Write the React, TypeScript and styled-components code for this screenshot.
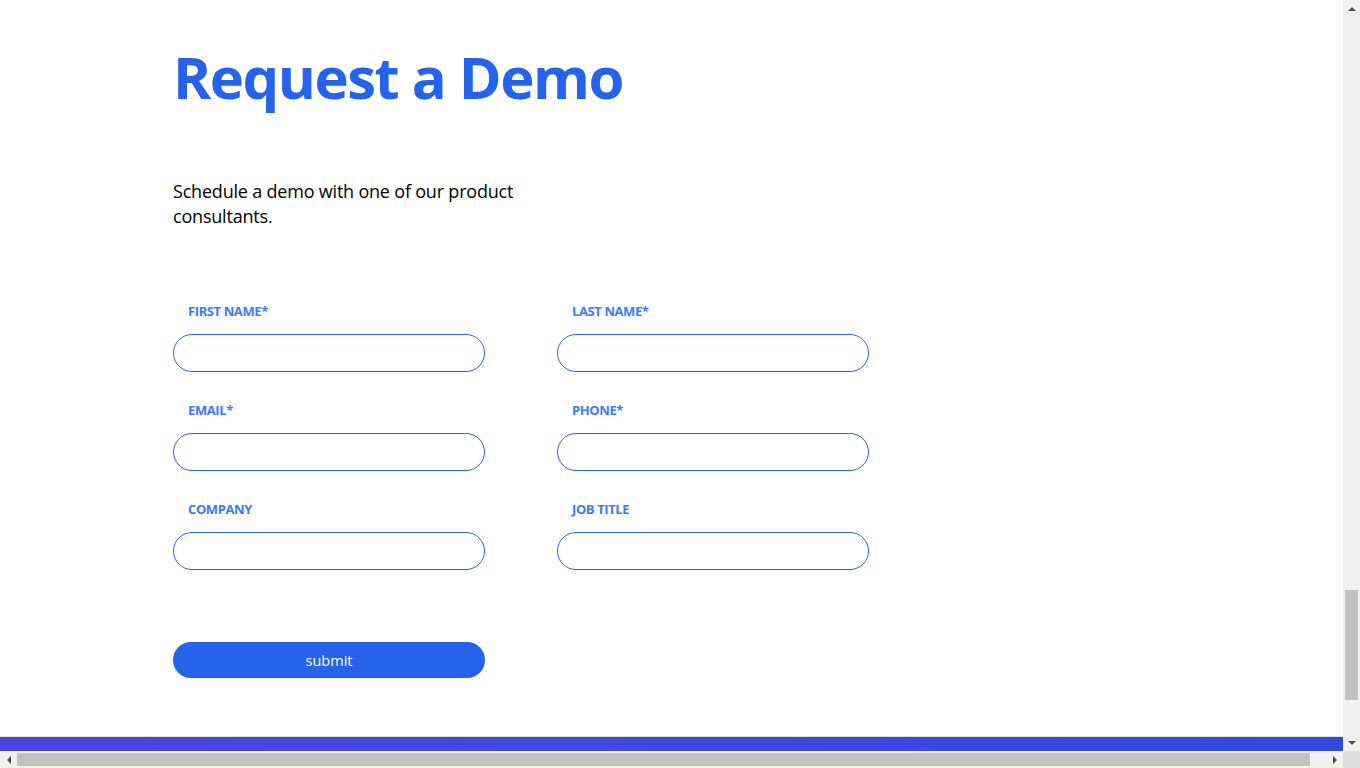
import React, { useLayoutEffect, useRef } from "react";
import styled, { createGlobalStyle } from "styled-components";

const SCROLL_OFFSET = 3900;
const BAR = 17;

const GlobalStyle = createGlobalStyle`
  html, body {
    margin: 0;
    padding: 0;
    background: #ffffff;
    overflow: hidden;
  }
  body {
    font-family: "Open Sans", "Noto Sans", "Liberation Sans", sans-serif;
    color: #000000;
  }
  * { box-sizing: border-box; }
`;

/* ---------- window frame: viewport + classic scrollbars ---------- */

const Frame = styled.div`
  width: 100vw;
  height: 100vh;
  display: grid;
  grid-template-columns: 1fr ${BAR}px;
  grid-template-rows: 1fr ${BAR}px;
`;

const Viewport = styled.div`
  overflow: hidden;
  min-width: 0;
  min-height: 0;
`;

const VBar = styled.div`
  background: #f1f1f1;
  display: flex;
  flex-direction: column;
`;

const HBar = styled.div`
  background: #f1f1f1;
  display: flex;
  flex-direction: row;
`;

const Corner = styled.div`
  background: #dcdcdc;
`;

const ArrowBtn = styled.div`
  flex: 0 0 ${BAR}px;
  width: ${BAR}px;
  height: ${BAR}px;
  display: flex;
  align-items: center;
  justify-content: center;
`;

const VTrack = styled.div<{ $offset: number }>`
  flex: 1;
  display: flex;
  flex-direction: column;
  padding-top: ${(p) => p.$offset}px;
`;

const HTrack = styled.div<{ $offset: number }>`
  flex: 1;
  display: flex;
  flex-direction: row;
  padding-left: ${(p) => p.$offset}px;
`;

const VThumb = styled.div<{ $size: number }>`
  height: ${(p) => p.$size}px;
  margin: 0 2px;
  background: #c1c1c1;
`;

const HThumb = styled.div<{ $size: number }>`
  width: ${(p) => p.$size}px;
  margin: 2px 0;
  background: #c1c1c1;
`;

type Dir = "up" | "down" | "left" | "right";

const arrowPoints: Record<Dir, string> = {
  up: "0,4 4,0 8,4",
  down: "0,0 8,0 4,4",
  left: "4,0 4,8 0,4",
  right: "0,0 0,8 4,4",
};

function Arrow({ dir }: { dir: Dir }) {
  const vertical = dir === "up" || dir === "down";
  return (
    <ArrowBtn>
      <svg
        width={vertical ? 8 : 4}
        height={vertical ? 4 : 8}
        viewBox={vertical ? "0 0 8 4" : "0 0 4 8"}
      >
        <polygon points={arrowPoints[dir]} fill="#505050" />
      </svg>
    </ArrowBtn>
  );
}

/* ---------- page content ---------- */

const Page = styled.div`
  width: 1360px;
  display: flex;
  flex-direction: column;
`;

const Above = styled.div`
  height: ${SCROLL_OFFSET}px;
`;

const Section = styled.section`
  padding: 47px 0 58px 173px;
  display: flex;
  flex-direction: column;
`;

const Title = styled.h1`
  margin: 0;
  font-size: 58px;
  line-height: 60px;
  font-weight: 700;
  color: #2563eb;
  letter-spacing: -1.5px;
`;

const Lead = styled.p`
  margin: 72px 0 0 0;
  max-width: 380px;
  font-size: 18px;
  line-height: 25px;
  letter-spacing: -0.2px;
  color: #000000;
`;

const Form = styled.form`
  margin-top: 73px;
  display: flex;
  flex-direction: column;
`;

const Grid = styled.div`
  display: grid;
  grid-template-columns: 312px 312px;
  column-gap: 72px;
  row-gap: 29px;
`;

const Field = styled.label`
  display: flex;
  flex-direction: column;
  gap: 14px;
`;

const LabelText = styled.span`
  padding-left: 15px;
  font-size: 13px;
  line-height: 18px;
  font-weight: 700;
  letter-spacing: -0.4px;
  color: #3b7cf2;
  text-transform: uppercase;
`;

const Input = styled.input`
  height: 38px;
  width: 100%;
  border: 1px solid #2563eb;
  border-radius: 19px;
  padding: 0 16px;
  font-family: inherit;
  font-size: 14px;
  outline: none;
  background: #ffffff;
`;

const Submit = styled.button`
  margin-top: 72px;
  width: 312px;
  height: 36px;
  border: none;
  border-radius: 18px;
  background: #2563eb;
  color: #ffffff;
  font-family: inherit;
  font-size: 14.5px;
  cursor: pointer;
`;

const Footer = styled.footer`
  border-top: 1px solid #dedede;
  height: 250px;
  background: linear-gradient(90deg, #4b48e2 0%, #4148e0 50%, #3349de 100%);
`;

const fields: { label: string; type: string }[] = [
  { label: "First Name*", type: "text" },
  { label: "Last Name*", type: "text" },
  { label: "Email*", type: "email" },
  { label: "Phone*", type: "tel" },
  { label: "Company", type: "text" },
  { label: "Job Title", type: "text" },
];

export default function App() {
  const viewportRef = useRef<HTMLDivElement>(null);

  useLayoutEffect(() => {
    if (viewportRef.current) viewportRef.current.scrollTop = SCROLL_OFFSET;
  }, []);

  return (
    <>
      <GlobalStyle />
      <Frame>
        <Viewport ref={viewportRef}>
          <Page>
            <Above />
            <Section>
              <Title>Request a Demo</Title>
              <Lead>Schedule a demo with one of our product consultants.</Lead>
              <Form onSubmit={(e) => e.preventDefault()}>
                <Grid>
                  {fields.map((f) => (
                    <Field key={f.label}>
                      <LabelText>{f.label}</LabelText>
                      <Input type={f.type} />
                    </Field>
                  ))}
                </Grid>
                <Submit type="submit">submit</Submit>
              </Form>
            </Section>
            <Footer />
          </Page>
        </Viewport>
        <VBar>
          <Arrow dir="up" />
          <VTrack $offset={573}>
            <VThumb $size={110} />
          </VTrack>
          <Arrow dir="down" />
        </VBar>
        <HBar>
          <Arrow dir="left" />
          <HTrack $offset={0}>
            <HThumb $size={1293} />
          </HTrack>
          <Arrow dir="right" />
        </HBar>
        <Corner />
      </Frame>
    </>
  );
}
